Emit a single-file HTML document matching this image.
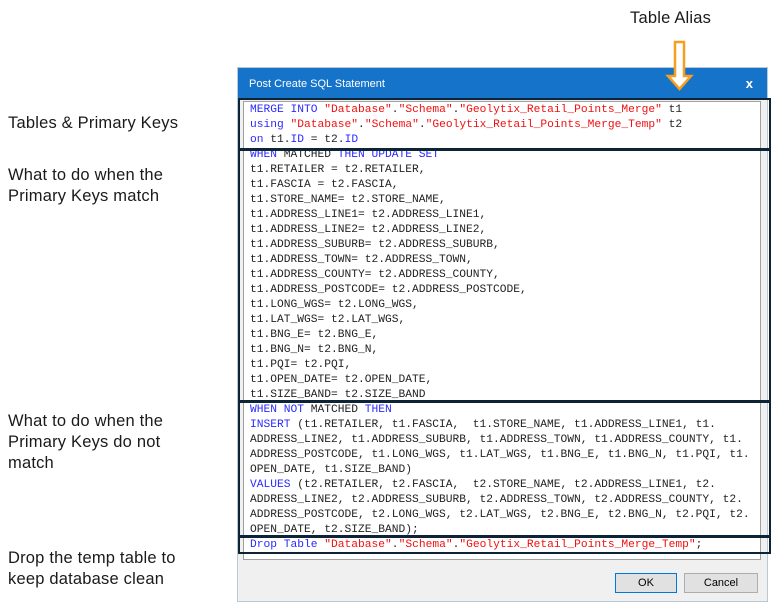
<!DOCTYPE html>
<html><head><meta charset="utf-8"><style>
html,body{margin:0;width:783px;height:613px;overflow:hidden}
body{background:#fff;position:relative;font-family:"Liberation Sans",sans-serif}
.lbl{position:absolute;left:8px;font-size:16.5px;color:#1a1a1a;line-height:21px;letter-spacing:0.2px}
#dlg{position:absolute;left:237px;top:67px;width:531px;height:535px;background:#f0f0f0;border:1px solid #b9c7d6;box-sizing:border-box}
#tb{position:absolute;left:0;top:0;right:0;height:32px;background:#1573c9;color:#fff;font-size:11px}
#ta{position:absolute;left:5px;top:33px;width:518px;height:459px;background:#fff;border:1px solid #a0a0a0;box-sizing:border-box}
pre{position:absolute;left:250px;top:103px;margin:0;font-family:"Liberation Mono",monospace;font-size:11.25px;line-height:15px;color:#222}
.k{color:#2a2aff}.s{color:#f01010}
.box{position:absolute;left:238px;width:533px;border:2.5px solid #0d2436;box-sizing:border-box}
.btn{position:absolute;top:505px;height:20px;background:#e1e1e1;border:1px solid #adadad;box-sizing:border-box;font-size:11px;text-align:center;line-height:18px;color:#000}
</style></head><body>
<div class="lbl" style="top:113px">Tables &amp; Primary Keys</div>
<div class="lbl" style="top:165px">What to do when the<br>Primary Keys match</div>
<div class="lbl" style="top:411px">What to do when the<br>Primary Keys do not<br>match</div>
<div class="lbl" style="top:548px">Drop the temp table to<br>keep database clean</div>
<div class="lbl" style="top:8px;left:630px">Table Alias</div>
<div id="dlg"><div id="tb"><span style="position:absolute;left:11px;top:10px">Post Create SQL Statement</span><span style="position:absolute;right:14px;top:8px;font-weight:bold;font-size:13px">x</span></div>
<div id="ta"></div>
<div class="btn" style="left:377px;width:62px;border:1px solid #0078d7">OK</div>
<div class="btn" style="left:446px;width:74px">Cancel</div>
</div>
<svg style="position:absolute;left:664px;top:40px" width="30" height="52"><path d="M11 2H20V36H27L15.5 49L4 36H11Z" fill="#fff" stroke="#f7a020" stroke-width="2.5"/></svg>
<pre><span class="k">MERGE INTO</span> <span class="s">"Database"</span>.<span class="s">"Schema"</span>.<span class="s">"Geolytix_Retail_Points_Merge"</span> t1
<span class="k">using</span> <span class="s">"Database"</span>.<span class="s">"Schema"</span>.<span class="s">"Geolytix_Retail_Points_Merge_Temp"</span> t2
<span class="k">on</span> t1.<span class="k">ID</span> = t2.<span class="k">ID</span>
<span class="k">WHEN</span> MATCHED <span class="k">THEN UPDATE SET</span>
t1.RETAILER = t2.RETAILER,
t1.FASCIA = t2.FASCIA,
t1.STORE_NAME= t2.STORE_NAME,
t1.ADDRESS_LINE1= t2.ADDRESS_LINE1,
t1.ADDRESS_LINE2= t2.ADDRESS_LINE2,
t1.ADDRESS_SUBURB= t2.ADDRESS_SUBURB,
t1.ADDRESS_TOWN= t2.ADDRESS_TOWN,
t1.ADDRESS_COUNTY= t2.ADDRESS_COUNTY,
t1.ADDRESS_POSTCODE= t2.ADDRESS_POSTCODE,
t1.LONG_WGS= t2.LONG_WGS,
t1.LAT_WGS= t2.LAT_WGS,
t1.BNG_E= t2.BNG_E,
t1.BNG_N= t2.BNG_N,
t1.PQI= t2.PQI,
t1.OPEN_DATE= t2.OPEN_DATE,
t1.SIZE_BAND= t2.SIZE_BAND
<span class="k">WHEN NOT</span> MATCHED <span class="k">THEN</span>
<span class="k">INSERT</span> (t1.RETAILER, t1.FASCIA,  t1.STORE_NAME, t1.ADDRESS_LINE1, t1.
ADDRESS_LINE2, t1.ADDRESS_SUBURB, t1.ADDRESS_TOWN, t1.ADDRESS_COUNTY, t1.
ADDRESS_POSTCODE, t1.LONG_WGS, t1.LAT_WGS, t1.BNG_E, t1.BNG_N, t1.PQI, t1.
OPEN_DATE, t1.SIZE_BAND)
<span class="k">VALUES</span> (t2.RETAILER, t2.FASCIA,  t2.STORE_NAME, t2.ADDRESS_LINE1, t2.
ADDRESS_LINE2, t2.ADDRESS_SUBURB, t2.ADDRESS_TOWN, t2.ADDRESS_COUNTY, t2.
ADDRESS_POSTCODE, t2.LONG_WGS, t2.LAT_WGS, t2.BNG_E, t2.BNG_N, t2.PQI, t2.
OPEN_DATE, t2.SIZE_BAND);
<span class="k">Drop Table</span> <span class="s">"Database"</span>.<span class="s">"Schema"</span>.<span class="s">"Geolytix_Retail_Points_Merge_Temp"</span>;</pre>
<div class="box" style="top:98px;height:53px"></div>
<div class="box" style="top:148px;height:255px"></div>
<div class="box" style="top:400px;height:138px"></div>
<div class="box" style="top:535px;height:19px"></div>
</body></html>
